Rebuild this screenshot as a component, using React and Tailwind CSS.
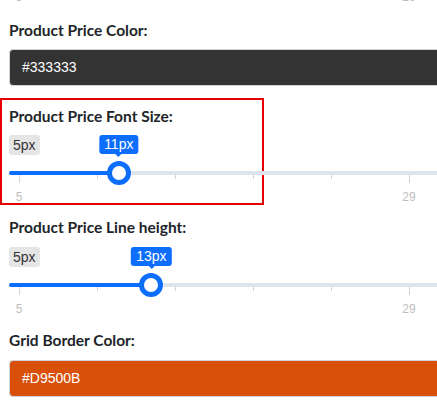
function Label({ children }) {
  return (
    <div className="h-5 text-[15.5px] leading-5 font-bold text-[#212529] font-['Lato',sans-serif]">
      {children}
    </div>
  )
}

function ColorInput({ value, bg }) {
  return (
    <div
      className={`h-[37px] flex items-center pl-[12px] border border-[#ced4da] rounded-l-[4px] text-white text-[14px] font-['Liberation_Sans',Arial,sans-serif] ${bg}`}
    >
      {value}
    </div>
  )
}

function GridLabels() {
  return (
    <div className="flex justify-between w-[410px] h-[14px] text-[12px] leading-[14px] text-[#bdbdbd] font-['Liberation_Sans',Arial,sans-serif]">
      <span className="w-5 text-center">5</span>
      <span className="w-5 text-center">29</span>
    </div>
  )
}

// range slider with min 5 and max 29 grid labels
function RangeSlider({ value }) {
  const x = 12 + (value - 5) * 16.3
  return (
    <div className="flex flex-col font-['Liberation_Sans',Arial,sans-serif]">
      {/* min badge + value tooltip */}
      <div className="relative h-5 flex">
        <span className="h-5 px-[4px] rounded-[3px] bg-[#e5e5e5] text-[14px] leading-5 text-[#333]">5px</span>
        <div className="absolute top-0 -translate-x-1/2 flex flex-col items-center" style={{ left: x }}>
          <span className="h-[19px] px-[5px] rounded-[3px] bg-[#0d6efd] text-white text-[14px] leading-[19px]">{value}px</span>
          <span className="w-0 h-0 border-x-[3px] border-x-transparent border-t-[3px] border-t-[#0d6efd]" />
        </div>
      </div>

      {/* track */}
      <div className="relative mt-4 h-[4px] rounded-full bg-[#dee4ec]">
        <div className="h-full rounded-l-full bg-[#0d6efd]" style={{ width: x }} />
        <div
          className="absolute -top-[10px] w-6 h-6 -translate-x-1/2 rounded-full bg-white border-[5px] border-[#0d6efd]"
          style={{ left: x }}
        />
      </div>

      {/* grid */}
      <div className="flex items-start justify-between w-[391px] ml-[10px]">
        {[0, 1, 2, 3, 4, 5].map(k => (
          <div key={k} className={`w-px bg-[#cfd4da] ${k === 0 || k === 5 ? 'h-[8px]' : 'h-[4px]'}`} />
        ))}
      </div>
      <div className="mt-[7px]">
        <GridLabels />
      </div>
    </div>
  )
}

export default function App() {
  return (
    <div className="w-[437px] h-[411px] overflow-hidden bg-white">
      <div className="w-[480px] pl-[9px] flex flex-col">
        {/* tail of the slider above */}
        <div className="-mt-[10px]">
          <GridLabels />
        </div>

        <div className="mt-[16px] flex flex-col gap-[9px]">
          <Label>Product Price Color:</Label>
          <ColorInput value="#333333" bg="bg-[#333333]" />
        </div>

        <div className="relative mt-[20px] flex flex-col gap-[9px]">
          <div className="absolute -top-[8px] -left-[9px] w-[264px] h-[107px] border-2 border-[#e60000] pointer-events-none" />
          <Label>Product Price Font Size:</Label>
          <RangeSlider value={11} />
        </div>

        <div className="mt-[13px] flex flex-col gap-[10px]">
          <Label>Product Price Line height:</Label>
          <RangeSlider value={13} />
        </div>

        <div className="mt-[14px] flex flex-col gap-[10px]">
          <Label>Grid Border Color:</Label>
          <ColorInput value="#D9500B" bg="bg-[#D9500B]" />
        </div>
      </div>
    </div>
  )
}
